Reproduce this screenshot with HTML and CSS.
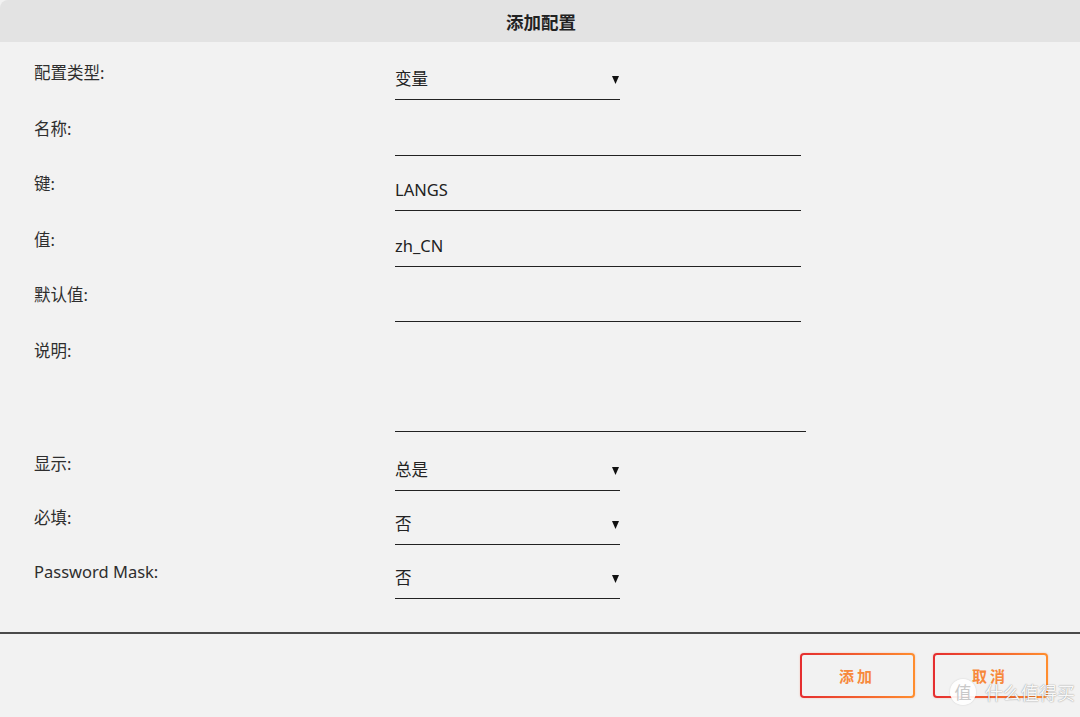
FILE: index.html
```html
<!DOCTYPE html>
<html lang="zh-CN">
<head>
<meta charset="utf-8">
<title>添加配置</title>
<link rel="stylesheet" href="styles.css">
</head>
<body>
<div class="dialog">
  <div class="header">添加配置</div>
  <div class="form">
    <div class="row r1">
      <div class="label">配置类型:</div>
      <div class="field select"><span class="val">变量</span><svg class="arrow" width="7" height="8" viewBox="0 0 7 8"><polygon points="0,0 7,0 3.5,8" fill="#111"/></svg></div>
    </div>
    <div class="row r1">
      <div class="label">名称:</div>
      <div class="field text"><span class="val"></span></div>
    </div>
    <div class="row r1">
      <div class="label">键:</div>
      <div class="field text"><span class="val">LANGS</span></div>
    </div>
    <div class="row r1">
      <div class="label">值:</div>
      <div class="field text"><span class="val">zh_CN</span></div>
    </div>
    <div class="row r1">
      <div class="label">默认值:</div>
      <div class="field text"><span class="val"></span></div>
    </div>
    <div class="row r6">
      <div class="label">说明:</div>
      <div class="field area"></div>
    </div>
    <div class="row r7">
      <div class="label">显示:</div>
      <div class="field select"><span class="val">总是</span><svg class="arrow" width="7" height="8" viewBox="0 0 7 8"><polygon points="0,0 7,0 3.5,8" fill="#111"/></svg></div>
    </div>
    <div class="row r7">
      <div class="label">必填:</div>
      <div class="field select"><span class="val">否</span><svg class="arrow" width="7" height="8" viewBox="0 0 7 8"><polygon points="0,0 7,0 3.5,8" fill="#111"/></svg></div>
    </div>
    <div class="row r7">
      <div class="label">Password Mask:</div>
      <div class="field select"><span class="val">否</span><svg class="arrow" width="7" height="8" viewBox="0 0 7 8"><polygon points="0,0 7,0 3.5,8" fill="#111"/></svg></div>
    </div>
  </div>
  <div class="footer">
    <button class="btn">添加</button>
    <button class="btn">取消</button>
  </div>
</div>
<div class="watermark"><span class="wm-logo">值</span><span class="wm-text">什么值得买</span></div>
</body>
</html>
```

FILE: styles.css
```css
* { box-sizing: border-box; }
html, body {
  margin: 0;
  padding: 0;
  background: #f2f2f2;
  font-family: "Noto Sans", "Noto Sans CJK SC", sans-serif;
  color: #2a2a2a;
}
.dialog {
  width: 1080px;
  height: 717px;
  display: flex;
  flex-direction: column;
}
.header {
  height: 42px;
  background: #e3e3e3;
  border-top-left-radius: 8px;
  display: flex;
  align-items: center;
  justify-content: center;
  font-size: 17.5px;
  font-weight: bold;
  color: #222;
  padding-left: 2px;
}
.form {
  padding: 10px 0 0 34px;
  height: 590px;
}
.row {
  display: flex;
  align-items: flex-start;
}
.r1 { height: 55.5px; }
.r6 { height: 113.5px; }
.r7 { height: 54px; }
.label {
  width: 361px;
  flex: none;
  font-size: 16.5px;
  line-height: 20px;
  padding-top: 11px;
  color: #2e2e2e;
}
.field {
  border-bottom: 1px solid #222;
  display: flex;
  align-items: center;
  padding-top: 17px;
}
.field .val {
  font-size: 16.5px;
  line-height: 20px;
  height: 20px;
  flex: 1;
  color: #222;
}
.select { width: 225px; height: 48px; align-items: flex-start; }
.select .arrow { margin: 7px 1px 0 0; }
.text { width: 406px; height: 48px; align-items: flex-start; }
.area { width: 411px; height: 102px; }
.footer {
  border-top: 2px solid #4a4a4a;
  flex: 1;
  display: flex;
  justify-content: flex-end;
  align-items: flex-start;
  gap: 18px;
  padding: 19px 32px 0 0;
}
.btn {
  width: 115px;
  height: 45px;
  border: 2px solid transparent;
  border-radius: 4px;
  background:
    linear-gradient(#f2f2f2, #f2f2f2) padding-box,
    linear-gradient(90deg, #e52d2f, #ff8e2e) border-box;
  box-shadow: 0 0 2px rgba(240, 90, 50, 0.35);
  font-family: "Noto Sans CJK SC", "Noto Sans", sans-serif;
  font-size: 15px;
  font-weight: bold;
  letter-spacing: 3px;
  padding-left: 5px;
  color: #f7893c;
}
.watermark {
  position: absolute;
  left: 950px;
  top: 679px;
  display: flex;
  align-items: center;
  gap: 9px;
}
.wm-logo {
  width: 26px;
  height: 26px;
  border-radius: 50%;
  background: rgba(255, 255, 255, 0.92);
  color: #c8c8c8;
  font-family: "Noto Sans CJK SC", sans-serif;
  font-size: 17px;
  line-height: 26px;
  text-align: center;
  box-shadow: 0 0 2px rgba(0,0,0,0.15);
}
.wm-text {
  font-family: "Noto Sans CJK SC", sans-serif;
  font-size: 18px;
  color: rgba(255, 255, 255, 0.95);
  text-shadow: 0 0 1px rgba(0,0,0,0.35), 0 0 2px rgba(0,0,0,0.2);
}
```
